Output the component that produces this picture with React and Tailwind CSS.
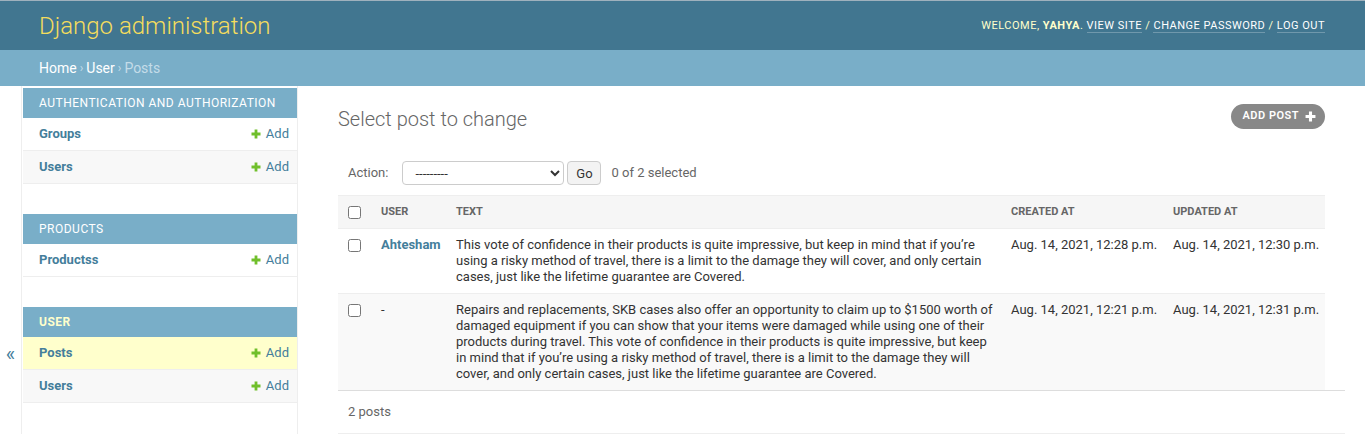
import React from 'react';

const link = 'text-[#447e9b]';

const PlusIcon = ({ className = '' }) => (
  <svg viewBox="0 0 10 10" className={className} aria-hidden="true">
    <path d="M3.6 0.5h2.8v3.1h3.1v2.8H6.4v3.1H3.6V6.4H0.5V3.6h3.1z" fill="currentColor" />
  </svg>
);

const modules = [
  {
    name: 'Authentication and Authorization',
    models: ['Groups', 'Users'],
  },
  {
    name: 'Products',
    models: ['Productss'],
  },
  {
    name: 'User',
    current: true,
    models: ['Posts', 'Users'],
  },
];

const posts = [
  {
    user: 'Ahtesham',
    lines: [
      'This vote of confidence in their products is quite impressive, but keep in mind that if you\u2019re',
      'using a risky method of travel, there is a limit to the damage they will cover, and only certain',
      'cases, just like the lifetime guarantee are Covered.',
    ],
    created: 'Aug. 14, 2021, 12:28 p.m.',
    updated: 'Aug. 14, 2021, 12:30 p.m.',
  },
  {
    user: null,
    lines: [
      'Repairs and replacements, SKB cases also offer an opportunity to claim up to $1500 worth of',
      'damaged equipment if you can show that your items were damaged while using one of their',
      'products during travel. This vote of confidence in their products is quite impressive, but keep',
      'in mind that if you\u2019re using a risky method of travel, there is a limit to the damage they will',
      'cover, and only certain cases, just like the lifetime guarantee are Covered.',
    ],
    created: 'Aug. 14, 2021, 12:21 p.m.',
    updated: 'Aug. 14, 2021, 12:31 p.m.',
  },
];

const Sidebar = () => (
  <div className="flex shrink-0">
    {/* Toggle */}
    <div className="w-[22px] border-r border-[#eee] flex justify-center pt-[258px]">
      <span className="text-[20px] leading-none text-[#447e9b]">&laquo;</span>
    </div>

    <nav className="w-[276px] border-r border-[#eee] pt-[2px] pl-[1px]">
      {modules.map((mod) => (
        <div key={mod.name} className="mb-[30px]">
          <div
            className={`h-[30px] bg-[#79aec8] pl-4 flex items-center text-[12px] uppercase tracking-[0.5px] ${
              mod.current ? 'text-[#ffc] font-bold' : 'text-white'
            }`}
          >
            {mod.name}
          </div>
          {mod.models.map((m, i) => {
            const isCurrent = mod.current && m === 'Posts';
            const bg = isCurrent ? 'bg-[#ffc]' : i % 2 === 1 ? 'bg-[#f8f8f8]' : 'bg-white';
            return (
              <div
                key={m}
                className={`h-[33px] flex items-center justify-between pl-4 pr-2 border-b border-[#eee] text-[13px] ${bg}`}
              >
                <span className={`font-bold ${link}`}>{m}</span>
                <span className={`flex items-center gap-[5px] ${link}`}>
                  <PlusIcon className="w-[10px] h-[10px] text-[#70bf2b]" />
                  Add
                </span>
              </div>
            );
          })}
        </div>
      ))}
    </nav>
  </div>
);

const App = () => {
  return (
    <div className="min-h-[435px] bg-white font-['Roboto',sans-serif] text-[#333] text-[13px]">
      {/* Header */}
      <header className="h-[50px] border-t border-[#9fb1bd] bg-[#417690] pl-[39px] pr-10 flex items-center justify-between">
        <h1 className="text-[24px] font-light text-[#f5dd5d] leading-none">Django administration</h1>
        <div className="text-[11px] uppercase tracking-[0.5px] text-[#ffc] pt-[1px]">
          Welcome, <strong className="font-bold">Yahya</strong>.{' '}
          <span className="text-white border-b border-white/25">View site</span> /{' '}
          <span className="text-white border-b border-white/25">Change password</span> /{' '}
          <span className="text-white border-b border-white/25">Log out</span>
        </div>
      </header>

      {/* Breadcrumbs */}
      <div className="h-[36px] bg-[#79aec8] pl-[39px] pr-10 flex items-center text-[14px] text-white">
        Home<span className="text-[#c4dce8] mx-[3px] text-[12px]">›</span>User
        <span className="text-[#c4dce8] mx-[3px] text-[12px]">›</span>
        <span className="text-[#c4dce8]">Posts</span>
      </div>

      <div className="flex">
        <Sidebar />

        {/* Content */}
        <main className="flex-1 min-w-0 pl-10 pr-5 pt-5">
          <div className="flex items-start justify-between mr-5 mb-5">
            <h1 className="text-[20px] font-light text-[#666] leading-6 mt-[1px]">Select post to change</h1>
            <button className="-mt-[2px] h-[25px] pl-[11px] pr-[9px] rounded-full bg-[#888] text-white text-[11px] font-semibold uppercase tracking-[0.5px] flex items-center gap-[6px]">
              Add post
              <PlusIcon className="w-[11px] h-[11px] text-white" />
            </button>
          </div>

          {/* Actions */}
          <div className="mr-5 p-[10px] flex items-center text-[#666] text-[13px] leading-6">
            <label className="mr-[14px]">Action:</label>
            <select className="w-[162px] h-[24px] border border-[#ccc] rounded-[4px] pl-2 text-[13px] text-[#333] bg-white">
              <option>---------</option>
            </select>
            <button className="ml-[3px] h-[24px] w-[34px] border border-[#ccc] rounded-[4px] bg-[#f3f3f3] text-[#333] text-[13px]">
              Go
            </button>
            <span className="ml-[10px]">0 of 2 selected</span>
          </div>

          {/* Results */}
          <div className="mr-5">
            <table className="w-full table-fixed border-collapse text-left">
              <colgroup>
                <col className="w-[33px]" />
                <col className="w-[75px]" />
                <col className="w-[555px]" />
                <col className="w-[162px]" />
                <col />
              </colgroup>
              <thead>
                <tr className="bg-[#f6f6f6] border-t border-[#eee] text-[11px] font-bold uppercase text-[#666]">
                  <th className="pl-[10px] py-2 align-middle leading-4">
                    <input type="checkbox" className="w-[13px] h-[13px] block" />
                  </th>
                  <th className="px-[10px] py-2 leading-4">User</th>
                  <th className="px-[10px] py-2 leading-4">Text</th>
                  <th className="px-[10px] py-2 leading-4">Created at</th>
                  <th className="px-[10px] py-2 leading-4">Updated at</th>
                </tr>
              </thead>
              <tbody>
                {posts.map((p, i) => (
                  <tr
                    key={i}
                    className={`border-t border-[#eee] align-top leading-4 ${i % 2 === 1 ? 'bg-[#f9f9f9]' : 'bg-white'}`}
                  >
                    <td className="pl-[10px] py-2">
                      <input type="checkbox" className="w-[13px] h-[13px] block mt-[2px]" />
                    </td>
                    <td className="px-[10px] py-2">
                      {p.user ? <span className={`font-bold ${link}`}>{p.user}</span> : '-'}
                    </td>
                    <td className="px-[10px] py-2">
                      {p.lines.map((l) => (
                        <span key={l} className="block whitespace-nowrap">{l}</span>
                      ))}
                    </td>
                    <td className="px-[10px] py-2 whitespace-nowrap">{p.created}</td>
                    <td className="px-[10px] py-2 whitespace-nowrap">{p.updated}</td>
                  </tr>
                ))}
              </tbody>
            </table>
          </div>

          {/* Paginator */}
          <div className="border-t border-[#ddd] border-b border-b-[#eee] py-[10px] pl-[10px] leading-[22px] text-[#666] text-[13px]">
            2 posts
          </div>
        </main>
      </div>
    </div>
  );
};

export default App;
